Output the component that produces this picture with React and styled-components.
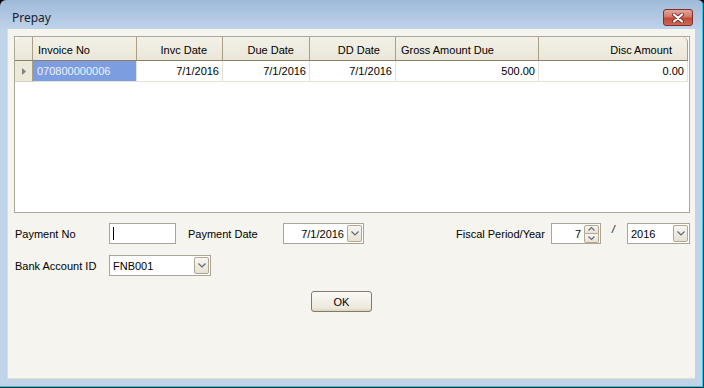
import React from "react";
import styled, { createGlobalStyle } from "styled-components";

const GlobalStyle = createGlobalStyle`
  body {
    margin: 0;
    background: #000;
    font-family: "Liberation Sans", Arial, sans-serif;
  }
`;

const COLS = "18px 104px 86px 87px 86px 143px 149px";

const Window = styled.div`
  width: 704px;
  height: 388px;
  display: flex;
  flex-direction: column;
  background: linear-gradient(#9fbad9 0px, #b3c9e3 18px, #bfd3e9 29px, #bfd3e9 100%);
  box-shadow: inset -1px -1px 0 #1d2a33, inset -2px -2px 0 #35c4e4;
  border-top-left-radius: 6px;
  border-top-right-radius: 6px;
  overflow: hidden;
`;

const TitleBar = styled.div`
  height: 29px;
  display: flex;
  align-items: center;
  justify-content: space-between;
  padding: 0 11px 0 12px;
  box-sizing: border-box;
`;

const Title = styled.span`
  font-family: "Noto Sans", "Liberation Sans", sans-serif;
  font-size: 12px;
  color: #15202e;
  margin-top: 6px;
`;

const CloseButton = styled.div`
  width: 30px;
  height: 17px;
  margin-top: 6px;
  box-sizing: border-box;
  border: 1px solid #7b3129;
  border-radius: 3px;
  background: linear-gradient(#e2a69c 0%, #d57767 45%, #c2493a 55%, #cc6a56 100%);
  display: flex;
  align-items: center;
  justify-content: center;
`;

const Frame = styled.div`
  flex: 1;
  display: flex;
  padding: 0 9px 9px 7px;
`;

const Content = styled.div`
  flex: 1;
  background: #f5f4ef;
  border-left: 1px solid #e0ddd3;
  border-bottom: 1px solid #e0ddd3;
  padding: 7px 5px 0 6px;
  display: flex;
  flex-direction: column;
`;

const Grid = styled.div`
  height: 177px;
  box-sizing: border-box;
  border: 1px solid #aca899;
  background: #fff;
`;

const Row = styled.div`
  display: grid;
  grid-template-columns: ${COLS};
`;

const HeaderCell = styled.div`
  height: 24px;
  box-sizing: border-box;
  font-size: 11px;
  color: #000;
  display: flex;
  align-items: center;
  padding: 2px ${(p) => (p.$align === "right" ? "15px" : "5px")} 0 5px;
  justify-content: ${(p) => (p.$align === "right" ? "flex-end" : "flex-start")};
  background: linear-gradient(#f3f1e8, #eae6d8);
  border-right: 1px solid #a99e86;
  border-bottom: 1px solid #8c7e68;
  &:first-child {
    border-top-left-radius: 5px;
  }
  &:last-child {
    border-top-right-radius: 5px;
  }
`;

const RowHead = styled.div`
  height: 21px;
  box-sizing: border-box;
  background: #ece9d8;
  border-right: 1px solid #a99e86;
  border-bottom: 1px solid #d5d1c4;
  display: flex;
  align-items: center;
  justify-content: center;
`;

const Cell = styled.div`
  height: 21px;
  box-sizing: border-box;
  font-size: 11px;
  display: flex;
  align-items: center;
  padding: 0 3px 0 4px;
  justify-content: ${(p) => (p.$align === "right" ? "flex-end" : "flex-start")};
  background: ${(p) => (p.$selected ? "#7d9de1" : "#fff")};
  color: ${(p) => (p.$selected ? "#eef3ff" : "#000")};
  border-right: 1px solid #e4e1d8;
  border-bottom: 1px solid #e4e1d8;
`;

const Form = styled.div`
  display: flex;
  flex-direction: column;
  padding: 10px 0 0 1px;
  gap: 11px;
`;

const FieldRow = styled.div`
  display: flex;
  align-items: center;
  height: 21px;
`;

const Label = styled.span`
  font-size: 11px;
  color: #000;
  width: ${(p) => p.$w}px;
  flex-shrink: 0;
`;

const Box = styled.div`
  width: ${(p) => p.$w}px;
  height: 21px;
  box-sizing: border-box;
  border: 1px solid #aaa597;
  background: #fff;
  display: flex;
  align-items: center;
  justify-content: ${(p) => (p.$align === "right" ? "flex-end" : "flex-start")};
  padding: 0 1px 0 3px;
  font-size: 11px;
  color: #000;
  flex-shrink: 0;
  gap: 3px;
`;

const Caret = styled.span`
  width: 1px;
  height: 13px;
  background: #000;
`;

const Value = styled.span`
  flex: 1;
  text-align: ${(p) => (p.$align === "right" ? "right" : "left")};
`;

const DropButton = styled.div`
  width: 15px;
  height: 17px;
  box-sizing: border-box;
  border: 1px solid #b3a88f;
  border-radius: 2px;
  background: linear-gradient(#f8f6f0, #e6e1d3);
  display: flex;
  align-items: center;
  justify-content: center;
  flex-shrink: 0;
`;

const SpinStack = styled.div`
  display: flex;
  flex-direction: column;
  flex-shrink: 0;
`;

const SpinButton = styled(DropButton)`
  height: 9px;
  width: 15px;
  border-radius: ${(p) => (p.$up ? "2px 2px 0 0" : "0 0 2px 2px")};
  border-top: ${(p) => (p.$up ? "1px solid #b3a88f" : "none")};
`;

const RightGroup = styled.div`
  margin-left: auto;
  display: flex;
  align-items: center;
`;

const Slash = styled.span`
  width: 26px;
  font-size: 10px;
  color: #000;
  padding-left: 11px;
  box-sizing: border-box;
  align-self: flex-start;
  margin-top: 1px;
  font-style: italic;
`;

const Gap = styled.span`
  width: ${(p) => p.$w}px;
  flex-shrink: 0;
`;

const ButtonRow = styled.div`
  display: flex;
  padding: 15px 0 0 297px;
`;

const OkButton = styled.button`
  width: 61px;
  height: 21px;
  box-sizing: border-box;
  border: 1px solid #857a66;
  border-radius: 3px;
  background: linear-gradient(#fbfaf6, #ece8dc 85%, #d9d2bf);
  font-family: "Liberation Sans", Arial, sans-serif;
  font-size: 11px;
  color: #000;
  padding: 0;
`;

function Chevron() {
  return (
    <svg width="8" height="5" viewBox="0 0 8 5">
      <path d="M0.5 0.5 L4 4 L7.5 0.5" fill="none" stroke="#5b6a84" strokeWidth="1.2" />
    </svg>
  );
}

function SpinArrow({ up }) {
  return (
    <svg width="7" height="4" viewBox="0 0 7 4">
      <path
        d={up ? "M0.5 3.5 L3.5 0.5 L6.5 3.5" : "M0.5 0.5 L3.5 3.5 L6.5 0.5"}
        fill="none"
        stroke="#5b6a84"
        strokeWidth="1.1"
      />
    </svg>
  );
}

function Combo({ w, value, align }) {
  return (
    <Box $w={w}>
      <Value $align={align}>{value}</Value>
      <DropButton>
        <Chevron />
      </DropButton>
    </Box>
  );
}

const headers = [
  { t: "Invoice No" },
  { t: "Invc Date", a: "right" },
  { t: "Due Date", a: "right" },
  { t: "DD Date", a: "right" },
  { t: "Gross Amount Due" },
  { t: "Disc Amount", a: "right" },
];

const row = [
  { t: "070800000006", sel: true },
  { t: "7/1/2016", a: "right" },
  { t: "7/1/2016", a: "right" },
  { t: "7/1/2016", a: "right" },
  { t: "500.00", a: "right" },
  { t: "0.00", a: "right" },
];

export default function App() {
  return (
    <>
      <GlobalStyle />
      <Window>
        <TitleBar>
          <Title>Prepay</Title>
          <CloseButton>
            <svg width="14" height="10" viewBox="0 0 14 10">
              <path d="M3 1.5 L11 8.5 M11 1.5 L3 8.5" stroke="#7b3129" strokeWidth="4" strokeLinecap="round" />
              <path d="M3 1.5 L11 8.5 M11 1.5 L3 8.5" stroke="#fff" strokeWidth="2.2" strokeLinecap="round" />
            </svg>
          </CloseButton>
        </TitleBar>
        <Frame>
          <Content>
            <Grid>
              <Row>
                <HeaderCell />
                {headers.map((h) => (
                  <HeaderCell key={h.t} $align={h.a}>
                    {h.t}
                  </HeaderCell>
                ))}
              </Row>
              <Row>
                <RowHead>
                  <svg width="4" height="7" viewBox="0 0 4 7">
                    <path d="M0 0 L4 3.5 L0 7 Z" fill="#808080" />
                  </svg>
                </RowHead>
                {row.map((c, i) => (
                  <Cell key={i} $align={c.a} $selected={c.sel}>
                    {c.t}
                  </Cell>
                ))}
              </Row>
            </Grid>

            <Form>
              <FieldRow>
                <Label $w={94}>Payment No</Label>
                <Box $w={67}>
                  <Caret />
                </Box>
                <Gap $w={12} />
                <Label $w={95}>Payment Date</Label>
                <Combo w={81} value="7/1/2016" align="right" />
                <RightGroup>
                  <Label $w={95}>Fiscal Period/Year</Label>
                  <Box $w={50} $align="right">
                    <Value $align="right">7</Value>
                    <SpinStack>
                      <SpinButton $up>
                        <SpinArrow up />
                      </SpinButton>
                      <SpinButton>
                        <SpinArrow />
                      </SpinButton>
                    </SpinStack>
                  </Box>
                  <Slash>/</Slash>
                  <Combo w={63} value="2016" />
                </RightGroup>
              </FieldRow>
              <FieldRow>
                <Label $w={94}>Bank Account ID</Label>
                <Combo w={102} value="FNB001" />
              </FieldRow>
            </Form>

            <ButtonRow>
              <OkButton>OK</OkButton>
            </ButtonRow>
          </Content>
        </Frame>
      </Window>
    </>
  );
}
